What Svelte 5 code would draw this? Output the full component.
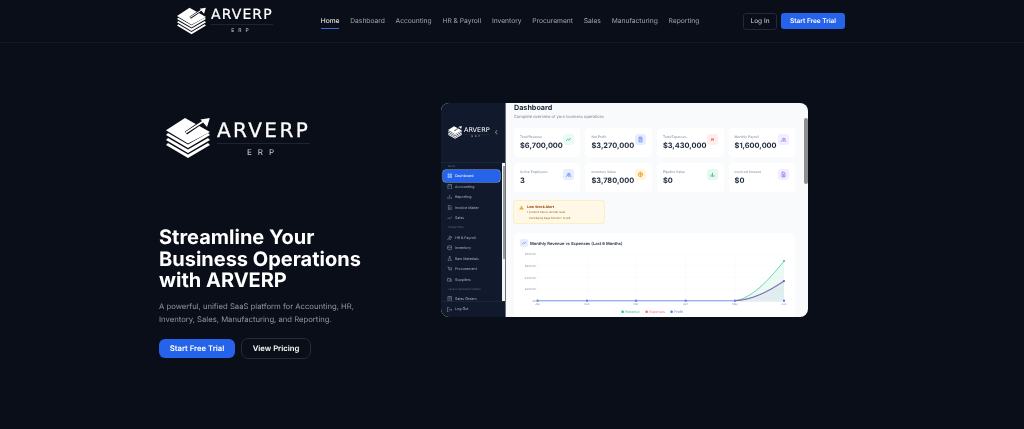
<script>
  const nav = ['Home', 'Dashboard', 'Accounting', 'HR & Payroll', 'Inventory', 'Procurement', 'Sales', 'Manufacturing', 'Reporting'];

  const stats = [
    { label: 'Total Revenue', value: '$6,700,000', bg: '#e9fbf2', fg: '#22b573', icon: 'M2 8l2.500-2.500 2 1.500L10 4' },
    { label: 'Net Profit', value: '$3,270,000', bg: '#e6edff', fg: '#4f7cf0', icon: 'M3.500 2h5v8h-5zM5 4.500h2M5 6.500h2' },
    { label: 'Total Expenses', value: '$3,430,000', bg: '#ffeded', fg: '#ea5455', icon: 'M4.500 4v4M7.500 4v4M4.500 8l3-4' },
    { label: 'Monthly Payroll', value: '$1,600,000', bg: '#f2edff', fg: '#9b7bf0', icon: 'M2 10c0-3 5-3 5 0M4.500 5.500a1.500 1.500 0 1 0 0-.1M7.500 4c2 0 2 3 0 3M8 7.500c1.500.3 2 1.200 2 2.500' },
    { label: 'Active Employees', value: '3', bg: '#e6edff', fg: '#5b84ee', icon: 'M2 10c0-3 5-3 5 0M4.500 5.500a1.500 1.500 0 1 0 0-.1M7.500 4c2 0 2 3 0 3M8 7.500c1.500.3 2 1.200 2 2.500' },
    { label: 'Inventory Value', value: '$3,780,000', bg: '#fff6df', fg: '#e89a1c', icon: 'M6 2l3.500 2v4L6 10 2.500 8V4zM2.500 5.500h7M6 2v8' },
    { label: 'Pipeline Value', value: '$0', bg: '#e4f9ef', fg: '#2eb57e', icon: 'M3.500 10V6M6 10V3M8.500 10V7' },
    { label: 'Invoiced Amount', value: '$0', bg: '#f2edff', fg: '#9163ee', icon: 'M3.500 2h3.500l1.500 1.500V10h-5zM5 6h2M5 8h2' }
  ];

  const sideGroups = [
    { title: 'MAIN', items: [
      { name: 'Dashboard', active: true, icon: 'M2 2h3v3H2zM7 2h3v3H7zM2 7h3v3H2zM7 7h3v3H7z' },
      { name: 'Accounting', icon: 'M2 1h8v10H2zM4 4h4' },
      { name: 'Reporting', icon: 'M2 11V6M6 11V2M10 11V7' },
      { name: 'Invoice Maker', icon: 'M3 1h4l2 2v8H3zM5 6h2M5 8h2' },
      { name: 'Sales', icon: 'M1 9l3-3 2 2 5-5' }
    ] },
    { title: 'OPERATIONS', items: [
      { name: 'HR & Payroll', icon: 'M1 11c0-4 7-4 7 0M4.500 5a2 2 0 1 0 0-.1M8 3c2.500 0 2.500 4 0 4' },
      { name: 'Inventory', icon: 'M6 1l5 2.500v5L6 11 1 8.500v-5zM1 4l5 2.500L11 4' },
      { name: 'Raw Materials', icon: 'M5 1h2v4l3 6H2l3-6z' },
      { name: 'Procurement', icon: 'M1 2h2l1 6h6l1-4H4M5 10.500h.5M9 10.500h.5' },
      { name: 'Suppliers', icon: 'M1 3h6v6H1zM7 5h2l2 2v2H7' }
    ] },
    { title: 'SALES & MANUFACTURING', items: [
      { name: 'Sales Orders', icon: 'M2 1h8v10H2zM4 4h4M4 6h4' }
    ] }
  ];

  const chartX = [537.500, 587, 636, 685.700, 735, 784];
  const ticks = ['$800.0K', '$600.0K', '$400.0K', '$200.0K', '$0'];
  const months = ['Jan', 'Feb', 'Mar', 'Apr', 'May', 'Jun'];
</script>

{#snippet mark()}
  <svg class="mark" viewBox="0 0 44 40" aria-hidden="true">
    <path fill="#fff" d="M2 25L0 27L22 40L44 27L42 25L22 36.500Z" />
    <path fill="#fff" d="M2 20L0 22L22 35L44 22L42 20L22 31.500Z" />
    <path fill="#fff" d="M2 15L0 17L22 30L44 17L42 15L22 26.500Z" />
    <path fill="#fff" d="M0 12.300L19 0L44 14L22 25.500Z" />
    <path class="cut" fill="none" stroke-width="3.500" d="M20 15L36 4" />
    <path class="cut" fill="none" stroke-width="3" d="M34 2L42 1L41 9" />
    <path fill="none" stroke="#fff" stroke-width="1.600" d="M20 14.500L37 3.500" />
    <path fill="#fff" d="M43.800 0L34.500 1.500L41 9Z" />
  </svg>
{/snippet}

<div class="page">
  <header>
    <div class="bar">
      <a class="logo small" href="#home">
        {@render mark()}
        <span class="word">
          <span class="name">ARVERP</span>
          <span class="sub">ERP</span>
        </span>
      </a>
      <nav>
        {#each nav as item, i}
          <a href="#{item}" class:current={i === 0}>{item}</a>
        {/each}
      </nav>
      <div class="actions">
        <button class="login">Log In</button>
        <button class="trial">Start Free Trial</button>
      </div>
    </div>
  </header>

  <main>
    <section class="copy">
      <a class="logo big" href="#home">
        {@render mark()}
        <span class="word">
          <span class="name">ARVERP</span>
          <span class="sub">ERP</span>
        </span>
      </a>
      <h1>Streamline Your<br />Business Operations<br />with ARVERP</h1>
      <p>A powerful, unified SaaS platform for Accounting, HR,<br />Inventory, Sales, Manufacturing, and Reporting.</p>
      <div class="cta">
        <button class="primary">Start Free Trial</button>
        <button class="ghost">View Pricing</button>
      </div>
    </section>

    <section class="shot">
      <aside>
        <div class="side-logo">
          <a class="logo tiny" href="#home">
            {@render mark()}
            <span class="word">
              <span class="name">ARVERP</span>
              <span class="sub">ERP</span>
            </span>
          </a>
          <span class="chev">‹</span>
        </div>
        <div class="side-scrollarea">
          <div class="side-list">
            {#each sideGroups as group}
              <div class="group-title">{group.title}</div>
              {#each group.items as item}
                <div class="side-item" class:active={item.active}>
                  <svg viewBox="0 0 12 12" fill="none" stroke="currentColor" stroke-width="1"><path d={item.icon} /></svg>
                  {item.name}
                </div>
              {/each}
            {/each}
          </div>
          <div class="side-scroll"><span></span></div>
        </div>
        <div class="side-foot">
          <div class="side-item">
            <svg viewBox="0 0 12 12" fill="none" stroke="currentColor" stroke-width="1"><path d="M5 1H1v10h4M4 6h7M9 4l2 2-2 2" /></svg>
            Log Out
          </div>
        </div>
      </aside>

      <div class="content">
        <h2>Dashboard</h2>
        <div class="lead">Complete overview of your business operations</div>
        <div class="stats">
          {#each stats as s}
            <div class="stat">
              <div>
                <div class="stat-label">{s.label}</div>
                <div class="stat-value">{s.value}</div>
              </div>
              <span class="stat-icon" style="background:{s.bg};color:{s.fg}">
                <svg viewBox="0 0 12 12" fill="none" stroke="currentColor" stroke-width="1.300"><path d={s.icon} /></svg>
              </span>
            </div>
          {/each}
        </div>

        <div class="alert">
          <svg viewBox="0 0 12 12"><path fill="#f0a020" d="M6 1l5.500 10H.5z" /><path stroke="#fff" d="M6 4.500v3M6 8.500v1" /></svg>
          <div>
            <div class="alert-title">Low Stock Alert</div>
            <div class="alert-line">1 product below reorder level</div>
            <div class="alert-line">– Packaging bags Monitor: 8/ left</div>
          </div>
        </div>

        <div class="chart-card">
          <div class="chart-head">
            <span class="chart-badge">
              <svg viewBox="0 0 12 12" fill="none" stroke="#4f7cf0" stroke-width="1.200"><path d="M2 8.500l3-3 2 1.500 3-3.500" /></svg>
            </span>
            Monthly Revenue vs Expenses (Last 6 Months)
          </div>
          <svg class="chart" viewBox="514 246 281 70">
            {#each [253, 264.750, 276.500, 288.250] as y}
              <line x1="537.500" x2="784" y1={y} y2={y} stroke="#eef1f5" stroke-width=".5" stroke-dasharray="1 1" />
            {/each}
            {#each chartX as x}
              <line x1={x} x2={x} y1="253" y2="300" stroke="#eef1f5" stroke-width=".5" stroke-dasharray="1 1" />
            {/each}
            <path fill="#22c58e" fill-opacity=".09" d="M735 299.700C752 297 768 280 784 260V299.700z" />
            <path fill="#5a58a8" fill-opacity=".07" d="M735 299.700C752 299 768 291 784 280V299.700z" />
            <line x1="537.500" x2="784" y1="300.300" y2="300.300" stroke="#d9dde3" stroke-width=".6" />
            <path fill="none" stroke="#7aa2f7" stroke-width="1" d="M537.500 299.700H735" />
            <path fill="none" stroke="#34c38f" stroke-width=".7" d="M735 299.700C752 297 768 280 784 260" />
            <path fill="none" stroke="#e0616b" stroke-width=".7" d="M735 299.700C752 298.700 768 290.700 784 279.500" />
            <path fill="none" stroke="#4d63d8" stroke-width=".8" d="M735 299.700C752 299 768 291 784 280.300" />
            {#each chartX as x}
              <rect x={x - 1} y="298.700" width="2" height="2" fill="#4f7cf0" />
            {/each}
            <circle cx="784" cy="260" r="1" fill="#34c38f" />
            <circle cx="784" cy="280" r="1" fill="#6a4fc0" />
            {#each ticks as t, i}
              <text x="536" y={254 + i * 11.750} text-anchor="end" class="tick">{t}</text>
            {/each}
            {#each months as m, i}
              <text x={chartX[i]} y="304" text-anchor="middle" class="tick">{m}</text>
            {/each}
            <text x="621" y="311.700" class="legend" fill="#34c38f">● Revenue</text>
            <text x="645" y="311.700" class="legend" fill="#f0717a">● Expenses</text>
            <text x="670" y="311.700" class="legend" fill="#5a7fe6">● Profit</text>
          </svg>
        </div>
        <div class="main-scroll"><span></span></div>
      </div>
    </section>
  </main>
</div>

<style>
  :global(body) {
    margin: 0;
    background: #0a0e18;
  }

  .page {
    height: 429px;
    overflow: hidden;
    background: #0a0e18;
    font-family: Inter, "Liberation Sans", sans-serif;
    color: #fff;
    text-rendering: geometricPrecision;
    filter: blur(.25px);
  }

  header {
    height: 42px;
    border-bottom: 1px solid #131824;
  }

  .bar {
    display: flex;
    align-items: center;
    height: 100%;
    padding: 0 179px 0 177px;
  }

  .logo {
    display: flex;
    color: #fff;
    text-decoration: none;
    align-items: center;
  }

  .cut {
    stroke: #0a0e18;
  }

  .word {
    display: flex;
    flex-direction: column;
    align-items: center;
  }

  .name {
    font-family: "DejaVu Sans", sans-serif;
    font-weight: 400;
    line-height: 1;
  }

  .sub {
    border-top: 1px solid #1e2433;
    align-self: stretch;
    text-align: center;
    color: #c8ccd4;
  }

  .small { gap: 5px; }
  .small .mark { width: 29px; height: 28px; }
  .small .name { font-size: 14px; letter-spacing: 1.100px; -webkit-text-stroke: .2px #fff; }
  .small .sub { font-size: 5px; letter-spacing: 4px; margin-top: 2px; padding-top: 3px; line-height: 6px; }

  .big { gap: 7px; }
  .big .mark { width: 44px; height: 40px; }
  .big .name { font-size: 20px; letter-spacing: 2.400px; -webkit-text-stroke: .3px #fff; }
  .big .sub { font-size: 8px; letter-spacing: 6px; margin-top: 3px; padding-top: 4px; line-height: 9px; }

  .tiny { gap: 2px; }
  .tiny .mark { width: 14px; height: 13px; }
  .tiny .cut { stroke: #111a2c; }
  .tiny .name { font-size: 6.500px; }
  .tiny .sub { font-size: 2.500px; letter-spacing: 2px; margin-top: 1px; line-height: 3px; }

  nav {
    display: flex;
    gap: 10.800px;
    margin-left: 48px;
    flex: 1;
  }

  nav a {
    color: #a0a6b1;
    font-size: 6.700px;
    line-height: 10px;
    padding: 2px 0;
    text-decoration: none;
    border-bottom: 1px solid transparent;
  }

  nav a.current {
    color: #fff;
    border-bottom-color: #3b6fd8;
  }

  .actions {
    display: flex;
    align-items: center;
    gap: 4px;
  }

  button {
    font-family: inherit;
    color: #fff;
    cursor: pointer;
    text-rendering: geometricPrecision;
  }

  .login {
    width: 34px;
    height: 17px;
    padding: 0;
    font-size: 6.500px;
    color: #d5d8de;
    background: transparent;
    border: 1px solid #232936;
    border-radius: 3px;
  }

  .trial {
    width: 64px;
    height: 16px;
    padding: 0;
    border: 0;
    border-radius: 3px;
    background: #2563eb;
    font-size: 6.500px;
    font-weight: 600;
  }

  main {
    display: flex;
    justify-content: space-between;
    padding: 60px 216px 0 159px;
  }

  .copy {
    width: 260px;
  }

  .copy .logo {
    margin: 15px 0 0 7px;
  }

  h1 {
    margin: 69px 0 0;
    font-size: 20px;
    line-height: 21.500px;
    font-weight: 700;
    letter-spacing: 0;
  }

  p {
    margin: 8px 0 0;
    font-size: 7.700px;
    line-height: 13px;
    color: #8f96a3;
  }

  .cta {
    display: flex;
    align-items: center;
    gap: 6px;
    margin-top: 12px;
  }

  .primary {
    width: 76px;
    height: 19px;
    padding: 0;
    border: 0;
    border-radius: 6px;
    background: #2563eb;
    font-size: 7.700px;
    font-weight: 600;
  }

  .ghost {
    width: 70px;
    height: 21px;
    padding: 0;
    border: 1px solid #262c3a;
    border-radius: 7px;
    background: transparent;
    font-size: 7.700px;
    font-weight: 600;
  }

  .shot {
    display: flex;
    width: 367px;
    height: 214px;
    overflow: hidden;
    border-radius: 8px;
    background: #f8fafc;
    color: #1e293b;
  }

  aside {
    display: flex;
    flex-direction: column;
    width: 64px;
    flex: none;
    background: #111a2c;
    color: #aab3c2;
    border-right: 1px solid #6b7280;
  }

  .side-logo {
    display: flex;
    align-items: center;
    justify-content: space-between;
    height: 60px;
    flex: none;
    padding: 0 7px 0 7px;
    border-bottom: 1px solid #1c2639;
    box-sizing: border-box;
  }

  .chev {
    font-size: 9px;
    color: #8d96a6;
  }

  .side-scrollarea {
    display: flex;
    height: 138px;
    overflow: hidden;
  }

  .side-list {
    flex: 1;
    min-width: 0;
    padding: 0 2px;
  }

  .group-title {
    height: 9px;
    box-sizing: border-box;
    padding: 3px 5px 0;
    font-size: 2.500px;
    line-height: 4px;
    color: #5f6b80;
    white-space: nowrap;
  }

  .group-title:first-child {
    height: 7.750px;
    padding-top: 2px;
  }

  .side-item {
    display: flex;
    align-items: center;
    gap: 3px;
    height: 10.500px;
    padding: 0 3.500px;
    font-size: 3.600px;
    color: #aeb6c4;
    border-radius: 3px;
    box-sizing: border-box;
    white-space: nowrap;
  }

  .side-item svg {
    width: 5.500px;
    height: 5.500px;
    flex: none;
  }

  .side-item.active {
    height: 12px;
    margin: -.75px 0;
    background: #2563eb;
    color: #fff;
    box-shadow: 0 0 0 .5px #8fb0f5;
  }

  .side-scroll {
    flex: none;
    width: 3px;
    background: #f4f4f5;
    padding-top: 3px;
  }

  .side-scroll span {
    display: block;
    width: 2px;
    height: 93px;
    margin: 0 auto;
    background: #9a9a9a;
  }

  .side-foot {
    flex: 1;
    padding: 2px 2px 0;
    border-top: 1px solid #1c2639;
  }

  .content {
    position: relative;
    flex: 1;
    padding: 0 13px 0 8px;
    min-width: 0;
  }

  h2 {
    margin: 0;
    font-size: 7.200px;
    line-height: 9px;
    font-weight: 700;
  }

  .lead {
    margin-top: 2px;
    font-size: 4px;
    line-height: 6px;
    color: #7b8798;
  }

  .stats {
    display: grid;
    grid-template-columns: repeat(4, 1fr);
    gap: 6px 5px;
    margin-top: 8px;
  }

  .stat {
    display: flex;
    justify-content: space-between;
    height: 29px;
    padding: 6px 6px 0;
    box-sizing: border-box;
    background: #fff;
    border-radius: 4px;
  }

  .stat-label {
    margin-top: 1px;
    font-size: 3.300px;
    line-height: 5px;
    color: #7b8798;
  }

  .stat-value {
    margin-top: 1px;
    font-size: 7.400px;
    line-height: 10px;
    font-weight: 700;
    color: #1e293b;
    white-space: nowrap;
  }

  .stat-icon {
    display: grid;
    place-items: center;
    flex: none;
    width: 11px;
    height: 11px;
    border-radius: 3px;
  }

  .stat-icon svg {
    width: 7px;
    height: 7px;
  }

  .alert {
    display: flex;
    gap: 3px;
    width: 92px;
    height: 24px;
    margin: 8px 0 0 -1px;
    padding: 4px 5px;
    box-sizing: border-box;
    background: #fff8e6;
    border: .5px solid #fdeec6;
    border-radius: 3px;
  }

  .alert > svg {
    width: 5px;
    height: 5px;
    flex: none;
  }

  .alert-title {
    font-size: 3.500px;
    line-height: 5px;
    font-weight: 700;
    color: #92400e;
  }

  .alert-line {
    font-size: 2.800px;
    line-height: 5.500px;
    color: #8a6a2e;
  }

  .chart-card {
    width: 281px;
    height: 84px;
    margin-top: 9px;
    padding-top: 6px;
    box-sizing: border-box;
    background: #fff;
    border-radius: 5px 5px 0 0;
  }

  .chart-head {
    display: flex;
    align-items: center;
    gap: 2px;
    height: 8px;
    margin-left: 6px;
    font-size: 4.100px;
    font-weight: 600;
    color: #1e293b;
  }

  .chart-badge {
    display: grid;
    place-items: center;
    width: 8px;
    height: 8px;
    border-radius: 2px;
    background: #e6edff;
  }

  .chart-badge svg {
    width: 6px;
    height: 6px;
  }

  .chart {
    display: block;
    width: 281px;
    height: 70px;
    overflow: visible;
  }

  .tick {
    font-size: 2.800px;
    fill: #8b93a1;
  }

  .legend {
    font-size: 3.500px;
  }

  .main-scroll {
    position: absolute;
    top: 0;
    right: 0;
    bottom: 0;
    width: 4px;
  }

  .main-scroll span {
    display: block;
    height: 66px;
    margin: 15px 0 0;
    background: #8f8f8f;
    border-radius: 2px;
  }
</style>
